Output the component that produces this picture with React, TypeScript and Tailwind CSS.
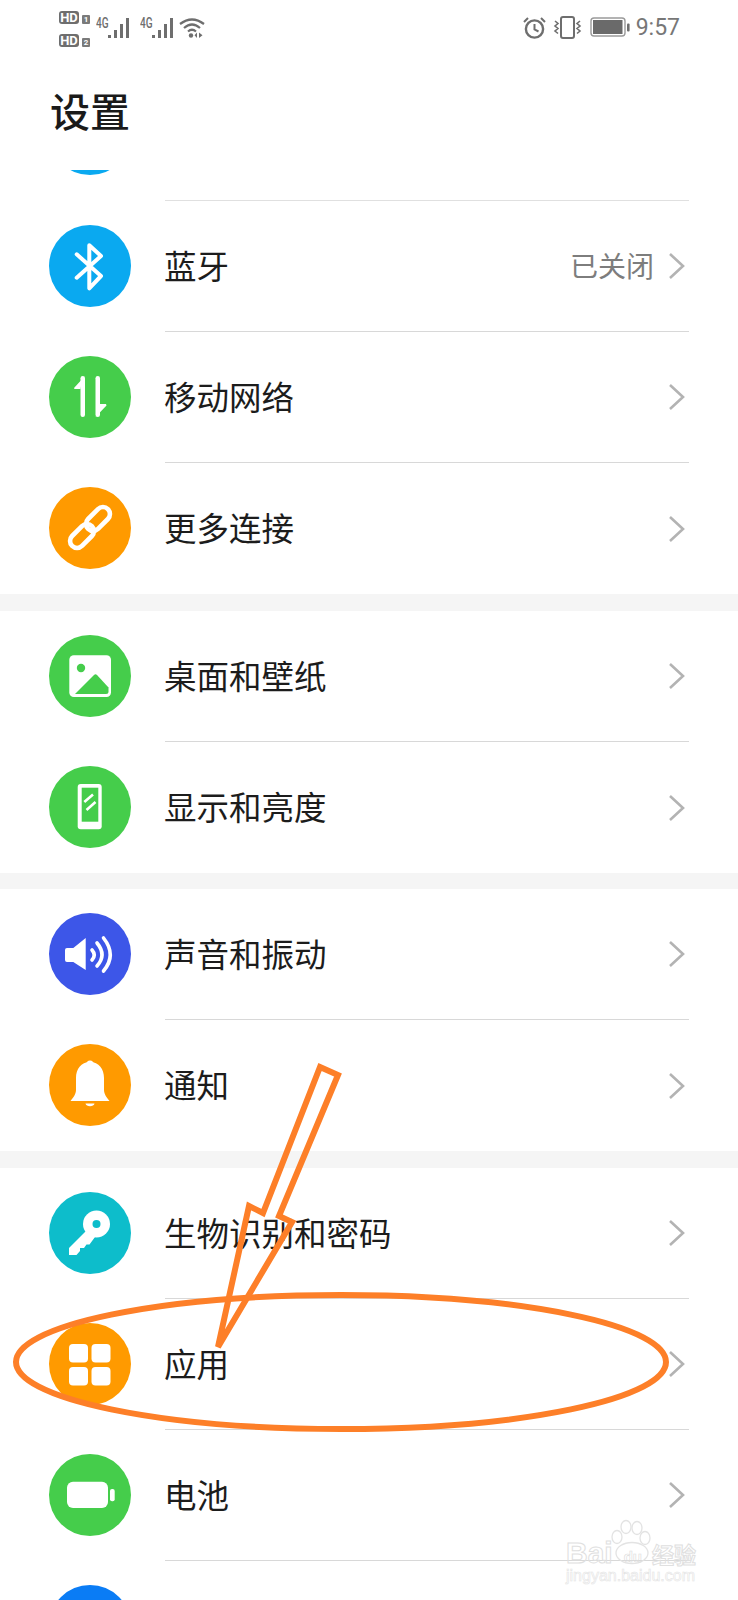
import React from 'react';

const font = "font-['Noto_Sans_CJK_SC','Noto_Sans',sans-serif]";

const BluetoothIcon = () => (
  <path d="M27.7 29.3L52 51L40.3 63.3V20.3L52 31L27.7 52.7" fill="none" stroke="white" strokeWidth="4" strokeLinecap="round" strokeLinejoin="round" />
);

const NetworkIcon = () => (
  <g fill="white">
    <rect x="31.5" y="20" width="4.5" height="41" rx="2.2" />
    <polygon points="36,20 25,32 25.5,33 31.5,33 33,24" />
    <rect x="46.5" y="20" width="4.5" height="41" rx="2.2" />
    <polygon points="46.5,61 57.5,49.5 57,48 51,48 49,56" />
  </g>
);

const LinkIcon = () => (
  <g fill="none" stroke="white" strokeWidth="4.6">
    <rect x="35" y="25" width="28" height="14" rx="7" transform="rotate(-45 49 32)" />
    <rect x="19" y="42" width="28" height="14" rx="7" transform="rotate(-45 33 49)" />
  </g>
);

const ImageIcon = () => (
  <g>
    <rect x="20.3" y="20.3" width="41.7" height="41.7" rx="4.5" fill="white" />
    <circle cx="32" cy="33" r="4.2" fill="#45cd4b" />
    <path d="M26 59L45 40Q46.5 38.5 48 40L59.5 52.5V56.5Q59.5 59 57 59Z" fill="#45cd4b" />
  </g>
);

const DisplayIcon = () => (
  <g>
    <rect x="28.7" y="18" width="24" height="45.3" rx="3" fill="white" />
    <rect x="32.7" y="21.7" width="16.6" height="34" fill="#45cd4b" />
    <path d="M35.3 36L44 28.5M37.5 44L46.5 36" stroke="white" strokeWidth="2.6" fill="none" />
  </g>
);

const SoundIcon = () => (
  <g>
    <path d="M16 37Q16 35 18 35H24.3L36.7 25V57L24.3 49H18Q16 49 16 47Z" fill="white" />
    <path d="M43 37Q47.5 42 43 47M48 30Q58 42 48 53M54.5 25Q68 42 54.5 58" fill="none" stroke="white" strokeWidth="3.6" strokeLinecap="round" />
  </g>
);

const BellIcon = () => (
  <g fill="white">
    <circle cx="41" cy="20" r="3.5" />
    <path d="M41 18C32 18 27 25 27 34V46C27 50 24 54 21.5 57H60.5C58 54 55 50 55 46V34C55 25 50 18 41 18Z" />
    <path d="M36.5 59.5H45.5C45 63 37 63 36.5 59.5Z" />
  </g>
);

const KeyIcon = () => (
  <g>
    <circle cx="47.5" cy="32" r="13.5" fill="white" />
    <circle cx="47.5" cy="32" r="4" fill="#0dbdcb" />
    <path d="M39 37L20 56V63H27.5L31 59V56H35L37.5 52.5H40.5L46 45Z" fill="white" />
  </g>
);

const AppsIcon = () => (
  <g fill="white">
    <rect x="20" y="21" width="19" height="18.5" rx="4" />
    <rect x="42.5" y="21" width="19" height="18.5" rx="4" />
    <rect x="20" y="44" width="19" height="18.5" rx="4" />
    <rect x="42.5" y="44" width="19" height="18.5" rx="4" />
  </g>
);

const BatteryIcon = () => (
  <g fill="white">
    <rect x="18" y="27.7" width="41" height="26.3" rx="6" />
    <rect x="61" y="35" width="4.7" height="12.3" rx="2" />
  </g>
);

const Circle = ({ color, children }: { color: string; children?: React.ReactNode }) => (
  <div className={`w-[82px] h-[82px] rounded-full shrink-0 ${color}`}>
    <svg width="82" height="82" viewBox="0 0 82 82">{children}</svg>
  </div>
);

const Chevron = () => (
  <svg width="17" height="28" viewBox="0 0 17 28" className="shrink-0">
    <path d="M2 2L15 14L2 26" fill="none" stroke="#b3b3b3" strokeWidth="2.6" />
  </svg>
);

type RowProps = {
  color: string;
  label: string;
  value?: string;
  divider?: boolean;
  icon?: React.ReactNode;
};

const Row = ({ color, label, value, divider = true, icon }: RowProps) => (
  <div className="h-[131px] flex items-start pl-[49px] pr-[49px]">
    <div className="h-[130px] flex items-center">
      <Circle color={color}>{icon}</Circle>
    </div>
    <div className={`ml-[34px] h-[131px] flex-1 flex items-center justify-between ${divider ? 'border-b border-[#d8d8d8]' : ''}`}>
      <span className="-ml-[1px] -mt-[3px] text-[32.5px] leading-[40px] text-[#1c1c1c]">{label}</span>
      <div className="flex items-center mr-[4px]">
        {value && <span className="mr-[14px] -mt-[2px] text-[28px] leading-[36px] text-[#7d7d7d]">{value}</span>}
        <Chevron />
      </div>
    </div>
  </div>
);

const Band = ({ height }: { height: string }) => <div className={`${height} bg-[#f5f5f5]`} />;

const HdBadge = ({ n }: { n: string }) => (
  <div className="flex items-end h-[15px]">
    <span className="w-[20px] h-[13px] rounded-[3px] bg-[#6e6e6e] text-white text-[13px] leading-[13px] font-bold text-center font-['Roboto',sans-serif]">HD</span>
    <span className="ml-[3px] w-[8px] h-[9px] rounded-[1px] bg-[#7a7a7a] text-white text-[8px] leading-[9px] font-bold text-center font-['Roboto',sans-serif]">{n}</span>
  </div>
);

const Signal = ({ gap }: { gap: string }) => (
  <div className={`flex items-start h-[22px] ${gap}`}>
    <span className="w-[12px] text-[#6e6e6e] text-[14px] leading-[12px] font-medium whitespace-nowrap origin-left scale-x-[0.72] font-['Roboto',sans-serif]">4G</span>
    <svg width="24" height="22" viewBox="0 0 24 22" className="-ml-[1px]">
      <g fill="#6e6e6e">
        <rect x="1" y="18" width="3" height="3" />
        <rect x="7" y="13" width="3" height="8" />
        <rect x="13" y="7" width="3" height="14" />
        <rect x="19" y="1" width="3" height="20" />
      </g>
    </svg>
  </div>
);

const StatusBar = () => (
  <div className="h-[60px] flex items-start justify-between pl-[59px] pr-[58px]">
    <div className="flex items-start">
      <div className="flex flex-col gap-[8px] pt-[9px]">
        <HdBadge n="1" />
        <HdBadge n="2" />
      </div>
      <div className="flex items-start pt-[17px]">
        <Signal gap="ml-[6px]" />
        <Signal gap="ml-[9px]" />
        <svg width="26" height="22" viewBox="0 0 26 22" className="ml-[4px]">
          <path d="M1 7Q13 -2 25 7M5 11Q13 4 21 11M9 14.5Q13 11 17 14.5" fill="none" stroke="#6e6e6e" strokeWidth="2.2" />
          <circle cx="12" cy="18.5" r="2.2" fill="#6e6e6e" />
          <path d="M18 15.5V21L15.5 18.2ZM20 15.5V21L23.5 18.2Z" fill="#6e6e6e" />
        </svg>
      </div>
    </div>
    <div className="flex items-start pt-[16px]">
      <svg width="23" height="23" viewBox="0 0 23 23">
        <circle cx="11.5" cy="13" r="8.6" fill="none" stroke="#6e6e6e" strokeWidth="2.4" />
        <path d="M11.5 8V13.5L15.5 15.5" fill="none" stroke="#6e6e6e" strokeWidth="2" />
        <path d="M1 6L5 2M22 6L18 2" fill="none" stroke="#6e6e6e" strokeWidth="2" />
      </svg>
      <svg width="29" height="23" viewBox="0 0 29 23" className="ml-[7px]">
        <rect x="8" y="1" width="13" height="21" rx="2" fill="none" stroke="#6e6e6e" strokeWidth="2" />
        <path d="M2 5L5 7.5L2 10L5 12.5L2 15L5 17.5M27 5L24 7.5L27 10L24 12.5L27 15L24 17.5" fill="none" stroke="#6e6e6e" strokeWidth="1.6" />
      </svg>
      <svg width="41" height="23" viewBox="0 0 41 23" className="ml-[8px]">
        <rect x="1" y="2" width="34" height="18" rx="3" fill="none" stroke="#9a9a9a" strokeWidth="1.4" />
        <rect x="3" y="4" width="29.5" height="14" fill="#6a6a6a" />
        <rect x="37" y="7.5" width="2.6" height="8" rx="1" fill="#6e6e6e" />
      </svg>
      <span className="ml-[5px] -mt-[2px] text-[23px] leading-[28px] text-[#777] font-['Roboto',sans-serif]">9:57</span>
    </div>
  </div>
);

const Watermark = () => (
  <div className="absolute left-[566px] top-[1518px] w-[140px] font-['Liberation_Sans',sans-serif]">
    <svg width="46" height="50" viewBox="0 0 46 50" className="absolute left-[42px] top-0">
      <g fill="none" stroke="#e3e3e3" strokeWidth="1.3">
        <ellipse cx="9" cy="19" rx="5" ry="6.5" />
        <ellipse cx="18" cy="9" rx="5" ry="6.5" />
        <ellipse cx="29" cy="10" rx="5" ry="6.5" />
        <ellipse cx="37" cy="20" rx="5" ry="6.5" />
        <ellipse cx="24" cy="35" rx="16" ry="10.5" />
      </g>
    </svg>
    <div className="relative pt-[20px] h-[50px] flex items-end whitespace-nowrap font-bold text-transparent [-webkit-text-stroke:1px_#e0e0e0]">
      <span className="text-[30px] leading-[30px]">Bai</span>
      <span className="ml-[11px] mb-[4px] text-[15px] leading-[15px] [-webkit-text-stroke:0.6px_#dcdcdc]">du</span>
      <span className="ml-[10px] text-[22px] leading-[30px] font-['Noto_Sans_CJK_SC',sans-serif]">经验</span>
    </div>
    <div className="text-[16px] leading-[16px] whitespace-nowrap text-transparent [-webkit-text-stroke:0.6px_#e4e4e4]">jingyan.baidu.com</div>
  </div>
);

// hand drawn marks on top of the screenshot
const Annotation = () => (
  <svg width="738" height="1600" viewBox="0 0 738 1600" className="absolute left-0 top-0 pointer-events-none">
    <ellipse cx="341" cy="1362" rx="325" ry="67" fill="none" stroke="#fd7f28" strokeWidth="6" />
    <path d="M320 1067L338 1075L279 1216L292 1222L218 1347L249 1206L263 1213Z" fill="none" stroke="#fd7f28" strokeWidth="6" />
  </svg>
);

const App = () => {
  return (
    <div className={`relative w-[738px] h-[1600px] overflow-hidden bg-white ${font}`}>
      <StatusBar />
      <div className="h-[110px] pl-[50px] pt-[25px]">
        <h1 className="text-[40px] leading-[50px] font-medium text-[#1a1a1a]">设置</h1>
      </div>

      <div className="h-[31px] overflow-hidden pl-[49px] pr-[49px] flex items-start">
        <div className="-mt-[77px]">
          <Circle color="bg-[#0aa9f0]" />
        </div>
        <div className="ml-[34px] flex-1 h-[31px] border-b border-[#e0e0e0]" />
      </div>

      <Row color="bg-[#0aa9f0]" label="蓝牙" value="已关闭" icon={<BluetoothIcon />} />
      <Row color="bg-[#45cd4b]" label="移动网络" icon={<NetworkIcon />} />
      <Row color="bg-[#ff9a00]" label="更多连接" divider={false} icon={<LinkIcon />} />
      <Band height="h-[17px]" />
      <Row color="bg-[#45cd4b]" label="桌面和壁纸" icon={<ImageIcon />} />
      <Row color="bg-[#45cd4b]" label="显示和亮度" divider={false} icon={<DisplayIcon />} />
      <Band height="h-[16px]" />
      <Row color="bg-[#3d56e8]" label="声音和振动" icon={<SoundIcon />} />
      <Row color="bg-[#ff9a00]" label="通知" divider={false} icon={<BellIcon />} />
      <Band height="h-[17px]" />
      <Row color="bg-[#0dbdcb]" label="生物识别和密码" icon={<KeyIcon />} />
      <Row color="bg-[#ff9a00]" label="应用" icon={<AppsIcon />} />
      <Row color="bg-[#45cd4b]" label="电池" icon={<BatteryIcon />} />
      <div className="pl-[49px] pt-[24px]">
        <Circle color="bg-[#0a7cf5]" />
      </div>

      <Watermark />
      <Annotation />
    </div>
  );
};

export default App;
